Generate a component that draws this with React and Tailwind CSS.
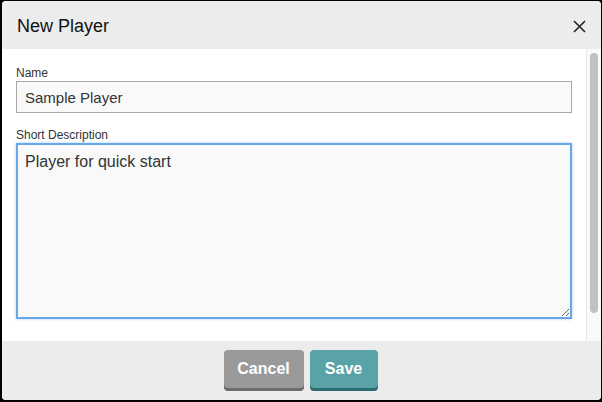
const font = { fontFamily: '"Liberation Sans", Arial, sans-serif' };

const App = () => {
  return (
    <div className="w-[602px] h-[402px] bg-black pt-[1px] pl-[2px] pr-[1px] pb-[2px]" style={font}>
      <div className="w-full h-full rounded-[4px] overflow-hidden flex flex-col bg-[#ececec]">
        {/* Header */}
        <div className="h-[48px] flex items-center justify-between pl-[15px] pr-[15px] bg-[#ececec]">
          <h1 className="text-[18px] text-[#111] mt-[2px]">New Player</h1>
          <svg width="13" height="13" viewBox="0 0 13 13" className="mt-[2px]">
            <path d="M1 1L12 12M12 1L1 12" stroke="#222" strokeWidth="1.6" />
          </svg>
        </div>

        {/* Body */}
        <div className="h-[292px] flex bg-white">
          <div className="flex-1 pl-[14px] pt-[17px]">
            <label className="block text-[12px] leading-[14px] text-[#333]">Name</label>
            <input
              readOnly
              value="Sample Player"
              className="mt-[1px] block w-[556px] h-[32px] border border-[#a8a8a8] bg-[#f9f9f9] px-[8px] text-[15px] text-[#333] outline-none"
              style={font}
            />
            <label className="block mt-[15px] text-[12px] leading-[14px] text-[#333]">Short Description</label>
            <textarea
              readOnly
              value="Player for quick start"
              className="mt-[1px] block w-[556px] h-[176px] border-2 border-[#6aa6ea] bg-[#f9f9f9] px-[7px] py-[5px] text-[16px] text-[#333] outline-none shadow-[0_0_3px_#a9cdf5]"
              style={font}
            />
          </div>
          <div className="w-[15px] border-l border-[#e6e6e6] bg-[#fafafa] pt-[4px] flex justify-center">
            <div className="w-[8px] h-[260px] rounded-full bg-[#c1c1c1]" />
          </div>
        </div>

        {/* Footer */}
        <div className="flex-1 flex justify-center items-start pt-[9px] pr-[2px] gap-[6px] bg-[#ececec]">
          <button className="w-[80px] h-[38px] rounded-[4px] bg-[#9a9a9a] text-white font-bold text-[16px] shadow-[0_3px_0_#6c6c6c]" style={font}>
            Cancel
          </button>
          <button className="w-[68px] h-[38px] rounded-[4px] bg-[#58a2a8] text-white font-bold text-[16px] shadow-[0_3px_0_#2c6b70]" style={font}>
            Save
          </button>
        </div>
      </div>
    </div>
  );
};

export default App;
